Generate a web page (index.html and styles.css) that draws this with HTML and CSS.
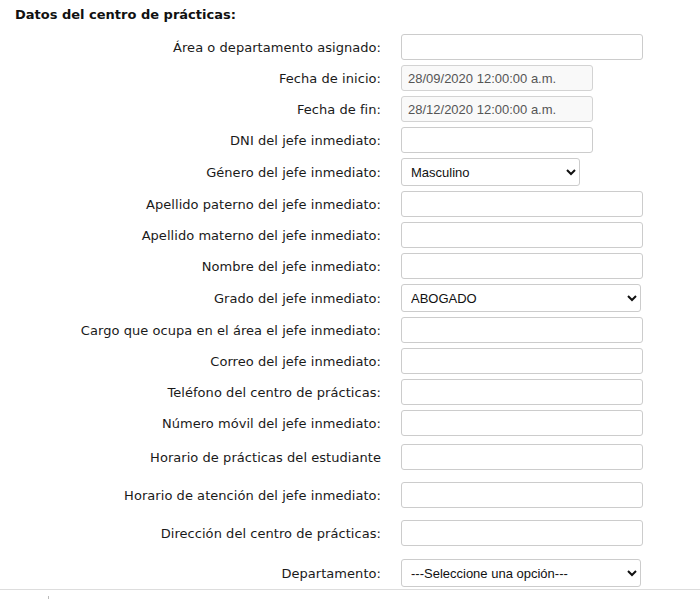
FILE: index.html
```html
<!DOCTYPE html>
<html lang="es">
<head>
<meta charset="utf-8">
<title>Datos del centro de prácticas</title>
<link rel="stylesheet" href="styles.css">
</head>
<body>
<div class="page">
  <h3 class="title">Datos del centro de prácticas:</h3>
  <div class="form">
    <div class="row"><label class="lbl">Área o departamento asignado:</label><input class="inp w-lg" type="text"></div>
    <div class="row"><label class="lbl">Fecha de inicio:</label><input class="inp w-md" type="text" value="28/09/2020 12:00:00 a.m." disabled></div>
    <div class="row"><label class="lbl">Fecha de fin:</label><input class="inp w-md" type="text" value="28/12/2020 12:00:00 a.m." disabled></div>
    <div class="row"><label class="lbl">DNI del jefe inmediato:</label><input class="inp w-md" type="text"></div>
    <div class="row"><label class="lbl">Género del jefe inmediato:</label><select class="sel w-sm"><option>Masculino</option><option>Femenino</option></select></div>
    <div class="row"><label class="lbl">Apellido paterno del jefe inmediato:</label><input class="inp w-lg" type="text"></div>
    <div class="row"><label class="lbl">Apellido materno del jefe inmediato:</label><input class="inp w-lg" type="text"></div>
    <div class="row"><label class="lbl">Nombre del jefe inmediato:</label><input class="inp w-lg" type="text"></div>
    <div class="row"><label class="lbl">Grado del jefe inmediato:</label><select class="sel w-sel"><option>ABOGADO</option></select></div>
    <div class="row"><label class="lbl">Cargo que ocupa en el área el jefe inmediato:</label><input class="inp w-lg" type="text"></div>
    <div class="row"><label class="lbl">Correo del jefe inmediato:</label><input class="inp w-lg" type="text"></div>
    <div class="row"><label class="lbl">Teléfono del centro de prácticas:</label><input class="inp w-lg" type="text"></div>
    <div class="row"><label class="lbl">Número móvil del jefe inmediato:</label><input class="inp w-lg" type="text"></div>
    <div class="row gap-8"><label class="lbl">Horario de prácticas del estudiante</label><input class="inp w-lg" type="text"></div>
    <div class="row gap-12"><label class="lbl">Horario de atención del jefe inmediato:</label><input class="inp w-lg" type="text"></div>
    <div class="row gap-12"><label class="lbl">Dirección del centro de prácticas:</label><input class="inp w-lg" type="text"></div>
    <div class="row gap-13"><label class="lbl">Departamento:</label><select class="sel w-sel"><option>---Seleccione una opción---</option></select></div>
  </div>
  <div class="footer"><div class="tick"></div></div>
</div>
</body>
</html>
```

FILE: styles.css
```css
html, body {
  margin: 0;
  padding: 0;
  background: #ffffff;
}
.page {
  font-family: "DejaVu Sans", Verdana, sans-serif;
  font-size: 13px;
  color: #1a1a1a;
}
.title {
  margin: 0;
  padding: 7px 0 0 15px;
  font-size: 13px;
  font-weight: bold;
  line-height: 15px;
  color: #111;
}
.form {
  display: flex;
  flex-direction: column;
  gap: 5px;
  margin-top: 12px;
}
.row {
  display: grid;
  grid-template-columns: 381px auto;
  column-gap: 20px;
  align-items: center;
}
.row.gap-8 { margin-top: 3px; }
.row.gap-12 { margin-top: 7px; }
.row.gap-13 { margin-top: 8px; }
.lbl {
  text-align: right;
  white-space: nowrap;
  line-height: 15px;
  letter-spacing: 0.05px;
}
.inp {
  box-sizing: border-box;
  height: 26px;
  border: 1px solid #cccccc;
  border-radius: 3px;
  padding: 0 6px;
  margin: 0;
  font-family: "Liberation Sans", Arial, sans-serif;
  font-size: 13px;
  color: #333;
  background: #fff;
  outline: none;
}
.inp:disabled {
  background: #f9f9f9;
  color: #555;
  border-color: #d3d3d3;
}
.sel {
  box-sizing: border-box;
  height: 28px;
  border: 1px solid #cccccc;
  border-radius: 3px;
  padding: 0 4px 0 5px;
  margin: 0;
  font-family: "Liberation Sans", Arial, sans-serif;
  font-size: 13px;
  color: #111;
  background: #fff;
}
.w-lg { width: 242px; }
.w-md { width: 192px; }
.w-sm { width: 179px; }
.w-sel { width: 240px; }
.footer {
  margin-top: 2px;
  border-top: 1px solid #dddddd;
  height: 9px;
}
.tick {
  margin: 6px 0 0 48px;
  width: 0;
  height: 3px;
  border-left: 1px solid #bbbbbb;
}
```
